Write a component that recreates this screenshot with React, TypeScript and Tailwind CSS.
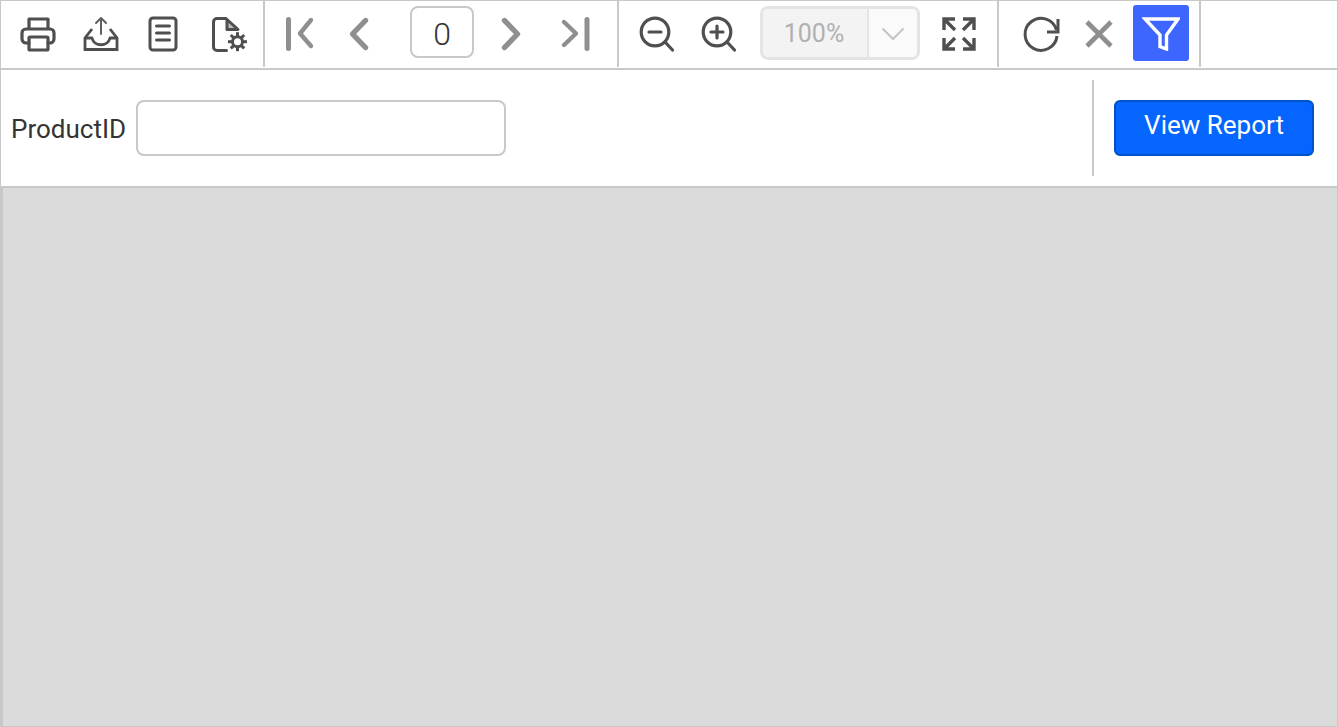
import React from "react";

const dark = "#4f4f4f";
const grey = "#8f8f8f";

function Box({ children, stroke = dark, sw = 3, className = "" }: { children: React.ReactNode; stroke?: string; sw?: number; className?: string }) {
  return (
    <svg width="36" height="36" viewBox="0 0 36 36" fill="none" stroke={stroke} strokeWidth={sw} strokeLinecap="round" strokeLinejoin="round" className={"block shrink-0 overflow-visible " + className}>
      {children}
    </svg>
  );
}

const teeth = [0, 45, 90, 135, 180, 225, 270, 315];

export default function App() {
  return (
    <div className="w-screen h-screen flex flex-col border border-[#c8c8c8] bg-white font-['Roboto',sans-serif] overflow-hidden">
      {/* toolbar */}
      <div className="flex items-start h-[69px] shrink-0 border-b-2 border-[#c8c8c8]">
        {/* group 1 */}
        <div className="flex items-center h-[66px] pl-[6px] pr-[2px] border-r-2 border-[#c8c8c8]">
          <div className="w-[62px] flex justify-center">
            <Box sw={3.2}>
              <path d="M9 12V3H28V12" />
              <path d="M9 27H6a4 4 0 0 1-4-4V17a4 4 0 0 1 4-4H30a4 4 0 0 1 4 4V23a4 4 0 0 1-4 4H28" />
              <rect x="9" y="21" width="19" height="13" rx="1" />
            </Box>
          </div>
          <div className="w-[62px] flex justify-center">
            <Box sw={2.8}>
              <path d="M19 18V2M14 7L19 2L24 7" strokeWidth="2" stroke="#5f5f5f" />
              <path d="M10 13L3 22V33.5H35V22L28 13" strokeLinecap="butt" strokeLinejoin="miter" />
              <path d="M3 22H10C12 31 26 31 28 22H35" strokeLinecap="butt" />
            </Box>
          </div>
          <div className="w-[62px] flex justify-center">
            <Box>
              <rect x="6" y="2" width="26" height="32" rx="3" />
              <path d="M12.5 10H25.5M12.5 17H25.5M12.5 24H25.5" />
            </Box>
          </div>
          <div className="w-[62px] flex justify-center ml-[6px]">
            <Box>
              <path d="M14 2.5H5a3.5 3.5 0 0 0-3.5 3.5V31a3.5 3.5 0 0 0 3.5 3.5H14.5" />
              <path d="M15 3.5L26 13.5H15Z" fill="#bdbdbd" />
              <g transform="translate(25.5 25.7)">
                <circle r="5" />
                {teeth.map((a) => (
                  <path key={a} d="M0 -5.5V-9.5" transform={`rotate(${a})`} strokeWidth="3" strokeLinecap="butt" />
                ))}
              </g>
            </Box>
          </div>
        </div>

        {/* group 2 */}
        <div className="flex items-center h-[66px] pl-[17px] pr-[23px] border-r-2 border-[#c8c8c8]">
          <Box stroke={grey} sw={5}>
            <path d="M6.5 3.5V32.5" />
            <path d="M29 4L18 17.5L29 30" strokeWidth="4.4" />
          </Box>
          <Box stroke={grey} sw={5.4} className="ml-[23px]">
            <path d="M24.5 4.5L11.5 18L24.5 31.5" />
          </Box>
          <div className="ml-[33px] mb-[4px] w-[64px] h-[52px] rounded-[8px] border-2 border-[#c8c8c8] flex items-center justify-center text-[32px] leading-none font-light text-[#333] pt-[4px]">
            0
          </div>
          <Box stroke={grey} sw={5.4} className="ml-[19px]">
            <path d="M11.5 4.5L24.5 18L11.5 31.5" />
          </Box>
          <Box stroke={grey} sw={5} className="ml-[29px]">
            <path d="M6 6L18 17.5L6 29" strokeWidth="4.4" />
            <path d="M29 3.5V32.5" />
          </Box>
        </div>

        {/* group 3 */}
        <div className="flex items-center h-[66px] pl-[20px] pr-[20px] border-r-2 border-[#c8c8c8]">
          <Box sw={3.2}>
            <circle cx="16" cy="16" r="13.8" />
            <path d="M26 26L33.5 34" />
            <path d="M10 16H22" />
          </Box>
          <Box sw={3.2} className="ml-[26px]">
            <circle cx="16" cy="16" r="13.8" />
            <path d="M26 26L33.5 34" />
            <path d="M10 16H22M16 10V22" />
          </Box>
          <div className="ml-[23px] mb-[2px] w-[160px] h-[54px] rounded-[8px] border-[3px] border-[#e4e4e4] flex overflow-hidden">
            <div className="w-[106px] bg-[#f3f3f3] flex items-center justify-center text-[25px] leading-none text-[#b0b0b0] border-r-2 border-[#e4e4e4] pr-[2px]">
              100%
            </div>
            <div className="flex-1 bg-[#fafafa] flex items-center justify-center">
              <svg width="24" height="14" viewBox="0 0 24 14" fill="none" stroke="#c4c4c4" strokeWidth="2" className="mt-[2px]">
                <path d="M1.5 1.5L12 12L22.5 1.5" />
              </svg>
            </div>
          </div>
          <Box sw={3.4} className="ml-[21px]">
            <g strokeLinecap="butt" strokeLinejoin="miter">
              <path d="M3 14V3H14M3 3L14 14" />
              <path d="M33 14V3H22M33 3L22 14" />
              <path d="M3 22V33H14M3 33L14 22" />
              <path d="M33 22V33H22M33 33L22 22" />
            </g>
          </Box>
        </div>

        {/* group 4 */}
        <div className="flex items-center h-[66px] pl-[24px] pr-[10px] border-r-2 border-[#c8c8c8]">
          <Box sw={3}>
            <path d="M33.5 14A16 16 0 1 0 34 20" strokeLinecap="butt" />
            <path d="M35 3V16H24" strokeLinecap="butt" strokeLinejoin="miter" />
          </Box>
          <Box stroke={grey} sw={4.6} className="ml-[22px]">
            <path d="M6 6L30 30M30 6L6 30" strokeLinecap="butt" />
          </Box>
          <div className="ml-[16px] mb-[2px] w-[56px] h-[56px] rounded-[3px] bg-[#3d66ff] flex items-center justify-center">
            <svg width="38" height="36" viewBox="0 0 38 36" fill="none" stroke="#ffffff" strokeWidth="3.4" strokeLinejoin="miter">
              <path d="M3 4H36L24.5 20V34L18 31.5V20Z" />
            </svg>
          </div>
        </div>
      </div>

      {/* parameter row */}
      <div className="flex items-center h-[116px] shrink-0 pl-[10px] pr-[23px]">
        <span className="text-[26px] leading-none text-[#333] w-[116px] whitespace-nowrap pt-[2px]">ProductID</span>
        <input className="ml-[9px] w-[370px] h-[56px] rounded-[8px] border-2 border-[#c8c8c8] bg-white outline-none" />
        <div className="ml-auto w-[2px] h-[96px] bg-[#c8c8c8]" />
        <button className="ml-[20px] w-[200px] h-[56px] rounded-[6px] bg-[#0565ff] border-2 border-[#0050c8] text-white text-[26px] leading-none pb-[7px]">
          View Report
        </button>
      </div>

      {/* report area */}
      <div className="flex-1 bg-[#dbdbdb] border-t-2 border-l-2 border-[#c8c8c8]" />
    </div>
  );
}
